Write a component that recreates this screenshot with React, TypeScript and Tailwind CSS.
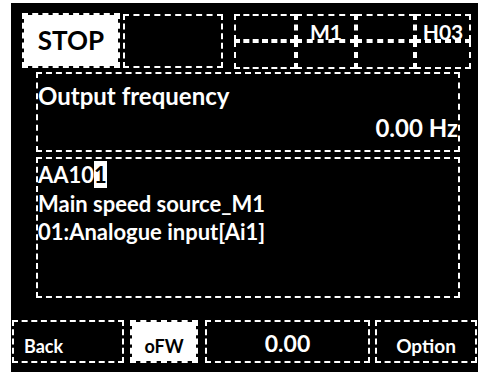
import React from "react";

const cell = "border-2 border-dashed border-white";

const StatusGrid = () => {
    const widths = ["w-[62px]", "w-[60px]", "w-[59px]", "w-[56px]"];
    const top = ["", "M1", "", "H03"];
    return (
        <div className="ml-[11px] mt-[1px] flex flex-col">
            <div className="flex h-[27px]">
                {top.map((t, i) => (
                    <div key={i} className={`${cell} ${widths[i]} flex justify-center pt-[5px] text-[21px] leading-[22px]`}>
                        {t}
                    </div>
                ))}
            </div>
            <div className="flex h-[28px]">
                {widths.map((w, i) => (
                    <div key={i} className={`${cell} ${w}`}/>
                ))}
            </div>
        </div>
    );
};

const App = () => {
    return (
        <div className="ml-[11px] mt-[3px] w-[467px] h-[369px] bg-black flex flex-col text-white font-bold font-['Lato',sans-serif]">
            {/* status bar */}
            <div className="flex items-start h-[66px] pt-[10px] pl-[11px]">
                <div className={`${cell} bg-white bg-clip-padding w-[98px] h-[55px] flex items-center justify-center text-black text-[26px]`}>
                    STOP
                </div>
                <div className={`${cell} ml-[3px] mt-[1px] w-[100px] h-[54px]`}/>
                <StatusGrid/>
            </div>

            {/* monitor */}
            <div className={`${cell} ml-[25px] mt-[3px] w-[424px] h-[80px] flex flex-col`}>
                <div className="mt-[8px] text-[24px] leading-[28px]">Output frequency</div>
                <div className="mt-[4px] text-[24px] leading-[28px] text-right">0.00 Hz</div>
            </div>

            {/* parameter */}
            <div className={`${cell} ml-[25px] mt-[5px] w-[424px] h-[141px] pt-[2px] text-[22px] leading-[28.5px]`}>
                <div>AA10<span className="bg-white text-black">1</span></div>
                <div>Main speed source_M1</div>
                <div>01:Analogue input[Ai1]</div>
            </div>

            {/* soft keys */}
            <div className="flex mt-[22px] h-[43px]">
                <div className={`${cell} ml-[1px] w-[112px] flex items-center pt-[10px] pl-[10px] text-[18px]`}>Back</div>
                <div className={`${cell} bg-white bg-clip-padding ml-[6px] w-[68px] flex items-center justify-center pt-[10px] text-black text-[18px]`}>oFW</div>
                <div className={`${cell} ml-[7px] w-[165px] flex items-center justify-center pt-[4px] text-[23px]`}>0.00</div>
                <div className={`${cell} ml-[5px] w-[102px] flex items-center justify-center pt-[10px] text-[19px]`}>Option</div>
            </div>
        </div>
    );
};

export default App;
